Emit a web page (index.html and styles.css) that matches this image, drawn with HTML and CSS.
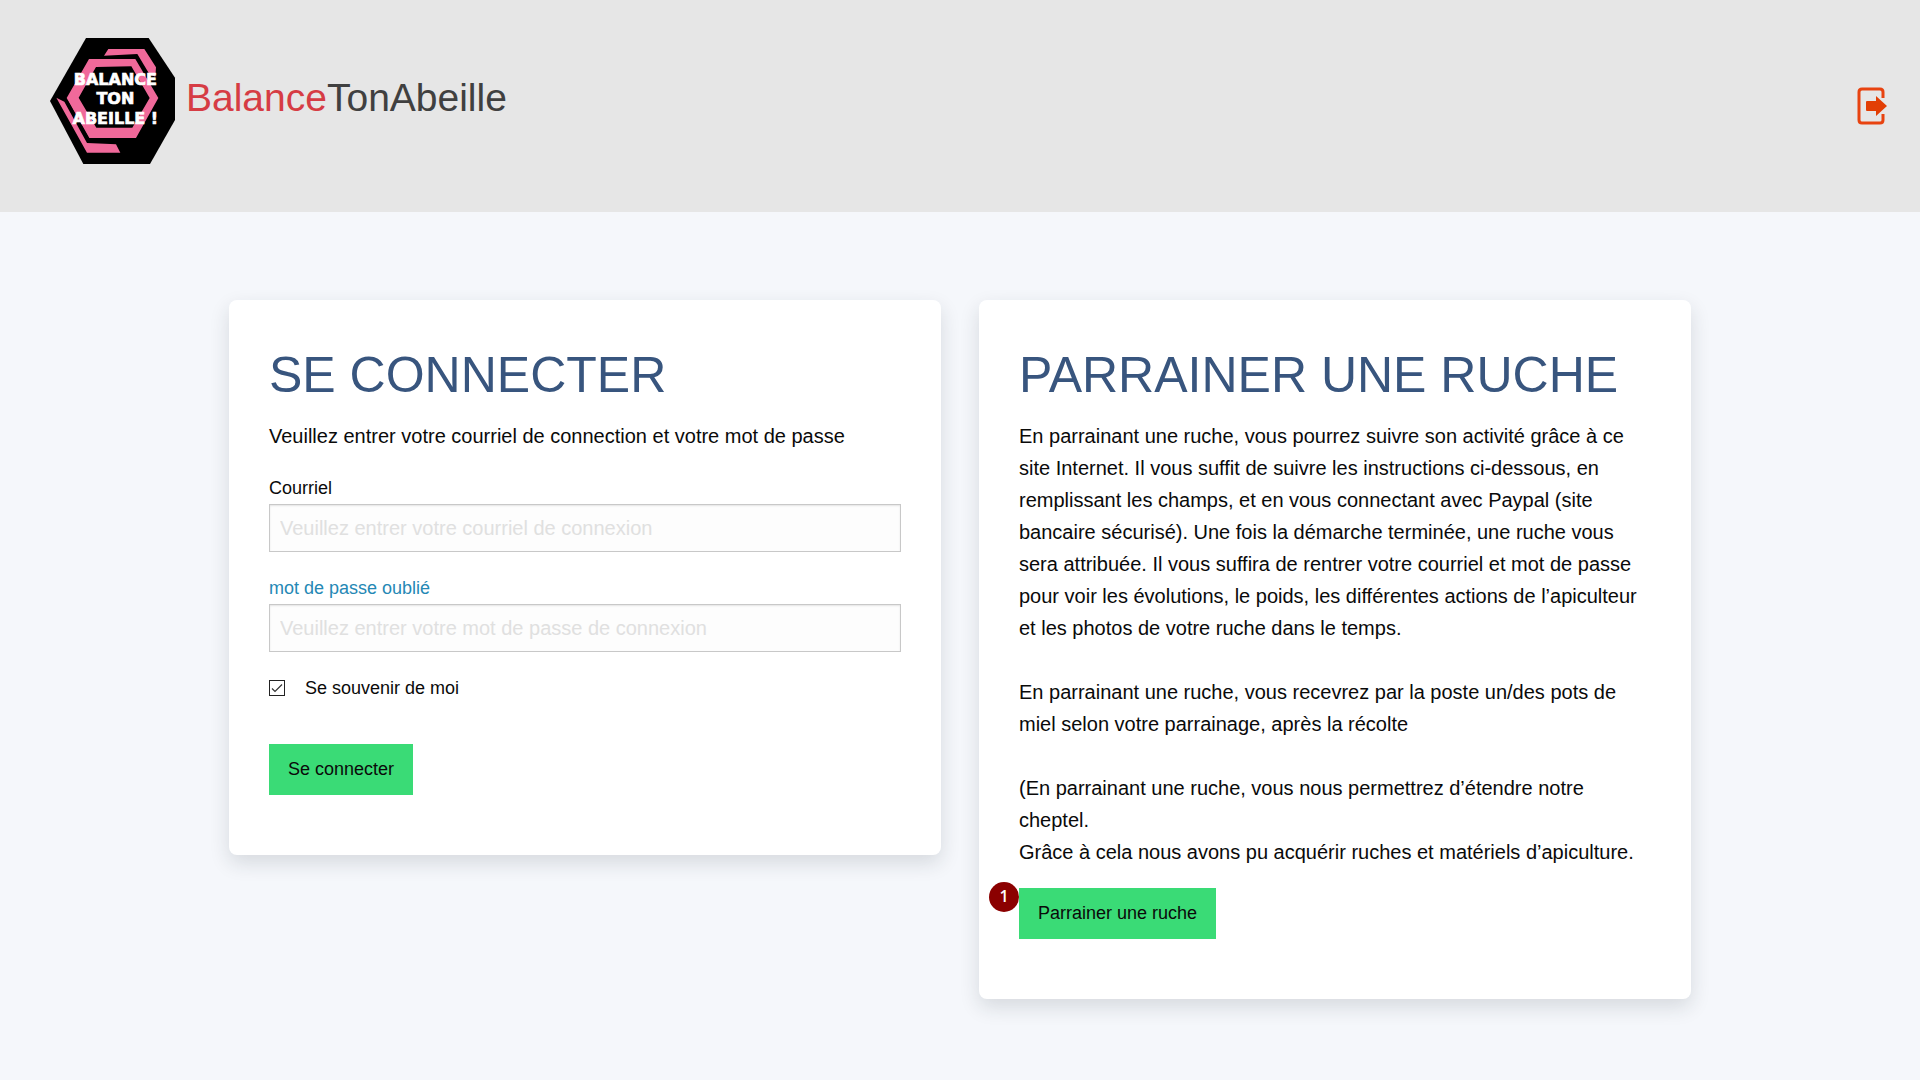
FILE: index.html
```html
<!DOCTYPE html>
<html lang="fr">
<head>
<meta charset="utf-8">
<meta name="viewport" content="width=device-width, initial-scale=1">
<title>BalanceTonAbeille</title>
<link rel="stylesheet" href="styles.css">
</head>
<body>
<header class="site-header">
  <a class="brand" href="#">
    <svg class="brand-logo" viewBox="30 24 378 378" aria-hidden="true">
      <path fill="#000" d="M138 24H326L405 143V270L330 402H130L30 213Z"/>
      <g fill="#f0699a">
        <path fill-rule="evenodd" d="M147 87H286L355 204L288 324H148L80 204ZM168 111L116 203L169 293H277L329 204L274 109Z"/>
        <path d="M205 57H313L348 112L346 140L328 132L292 72L192 77Z"/>
        <path d="M49 203L73 215L141 339L228 343L241 368H141Z"/>
      </g>
      <path fill="none" stroke="#000" stroke-width="8" d="M80 214L145 330H290"/>
      <g class="brand-logo-text">
        <text x="226" y="165">BALANCE</text>
        <text x="226" y="223">TON</text>
        <text x="226" y="283">ABEILLE !</text>
      </g>
    </svg>
    <span class="brand-name"><span class="brand-accent">Balance</span>TonAbeille</span>
  </a>
  <a class="logout" href="#" aria-label="Quitter">
    <svg width="30" height="38" viewBox="0 0 30 38" aria-hidden="true">
      <path fill="none" stroke="#e84310" stroke-width="3" d="M26 11V5Q26 2 23 2H5Q2 2 2 5V33Q2 36 5 36H23Q26 36 26 33V27"/>
      <path fill="#e23e05" d="M10 14H19V9L30 19L19 29V24H10Q9 24 9 23V15Q9 14 10 14Z"/>
    </svg>
  </a>
</header>

<main class="cards">
  <section class="card">
    <h1 class="card-title">SE CONNECTER</h1>
    <form class="login">
      <p class="text">Veuillez entrer votre courriel de connection et votre mot de passe</p>
      <div class="field">
        <label class="label" for="email">Courriel</label>
        <input class="input" id="email" type="email" placeholder="Veuillez entrer votre courriel de connexion">
      </div>
      <div class="field">
        <a class="label link" href="#">mot de passe oublié</a>
        <input class="input" id="password" type="password" aria-label="Mot de passe" placeholder="Veuillez entrer votre mot de passe de connexion">
      </div>
      <label class="label remember" for="remember"><input class="checkbox" id="remember" type="checkbox" checked>Se souvenir de moi</label>
      <button class="button" type="submit">Se connecter</button>
    </form>
  </section>

  <section class="card">
    <h1 class="card-title">PARRAINER UNE RUCHE</h1>
    <p class="text">En parrainant une ruche, vous pourrez suivre son activité grâce à ce site Internet. Il vous suffit de suivre les instructions ci-dessous, en remplissant les champs, et en vous connectant avec Paypal (site bancaire sécurisé). Une fois la démarche terminée, une ruche vous sera attribuée. Il vous suffira de rentrer votre courriel et mot de passe pour voir les évolutions, le poids, les différentes actions de l’apiculteur et les photos de votre ruche dans le temps.<br><br>En parrainant une ruche, vous recevrez par la poste un/des pots de miel selon votre parrainage, après la récolte<br><br>(En parrainant une ruche, vous nous permettrez d’étendre notre cheptel.<br>Grâce à cela nous avons pu acquérir ruches et matériels d’apiculture.</p>
    <div class="sponsor">
      <button class="button" type="button">Parrainer une ruche</button>
      <span class="badge">1</span>
    </div>
  </section>
</main>
</body>
</html>
```

FILE: styles.css
```css
* {
  box-sizing: border-box;
}

body {
  margin: 0;
  min-height: 100vh;
  background: #f5f7fb;
  color: #0a0a0a;
  font-family: "Liberation Sans", Arial, sans-serif;
  font-size: 20px;
  line-height: 32px;
}

.site-header {
  display: flex;
  justify-content: space-between;
  padding: 38px 33px 48px 50px;
  background: #e6e6e6;
}

.brand {
  display: flex;
  gap: 10px;
  color: #404040;
  text-decoration: none;
}

.brand-logo {
  width: 126px;
  height: 126px;
}

.brand-logo-text {
  fill: #fff;
  stroke: #fff;
  stroke-width: 2px;
  font-family: "DejaVu Sans", sans-serif;
  font-size: 48px;
  font-weight: 700;
  text-anchor: middle;
}

.brand-name {
  padding-top: 36px;
  font-size: 39px;
  line-height: 48px;
}

.brand-accent {
  color: #d63c44;
}

.logout {
  align-self: flex-end;
  padding-bottom: 39px;
}

.logout svg {
  display: block;
}

.cards {
  display: flex;
  flex-wrap: wrap;
  align-items: flex-start;
  gap: 38px;
  max-width: 1500px;
  margin: 0 auto;
  padding: 88px 19px;
}

.card {
  flex: 1 1 480px;
  padding: 40px;
  border-radius: 8px;
  background: #fff;
  box-shadow: 0 8px 20px rgba(30, 40, 50, 0.14);
}

.card-title {
  margin: 0 0 10px;
  color: #38557e;
  font-size: 50px;
  font-weight: 400;
  line-height: 70px;
}

.text {
  margin: 0 0 20px;
}

.field {
  margin-bottom: 20px;
}

.label {
  display: block;
  font-size: 18px;
}

.link {
  color: #2588b5;
  text-decoration: none;
}

.input {
  display: block;
  width: 100%;
  height: 48px;
  padding: 0 10px;
  border: 1px solid #c8c8c8;
  border-radius: 0;
  background: #fdfdfd;
  box-shadow: inset 0 1px 2px rgba(10, 10, 10, 0.1);
  color: inherit;
  font: inherit;
}

.input::placeholder {
  color: #e0e0e0;
  opacity: 1;
}

.remember {
  display: flex;
  align-items: center;
  gap: 20px;
  margin-bottom: 40px;
}

.checkbox {
  width: 16px;
  height: 16px;
  margin: 0;
  border: 1px solid #222;
  appearance: none;
  background: #fff url("data:image/svg+xml,%3Csvg xmlns='http://www.w3.org/2000/svg' viewBox='0 0 14 14'%3E%3Cpath fill='none' stroke='%23333' stroke-width='1.2' d='M2 7.5l3 3 7-7'/%3E%3C/svg%3E") center / 14px no-repeat;
}

.button {
  display: block;
  height: 51px;
  margin-bottom: 20px;
  padding: 0 19px 2px;
  border: 0;
  background: #3adb76;
  color: #0a0a0a;
  font: inherit;
  font-size: 18px;
  cursor: pointer;
}

.sponsor {
  position: relative;
}

.badge {
  position: absolute;
  top: -6px;
  left: -30px;
  width: 30px;
  height: 30px;
  border-radius: 50%;
  background: #8b0000;
  color: #fff;
  font-family: "Open Sans", sans-serif;
  font-size: 16px;
  font-weight: 600;
  line-height: 28px;
  text-align: center;
}
```
